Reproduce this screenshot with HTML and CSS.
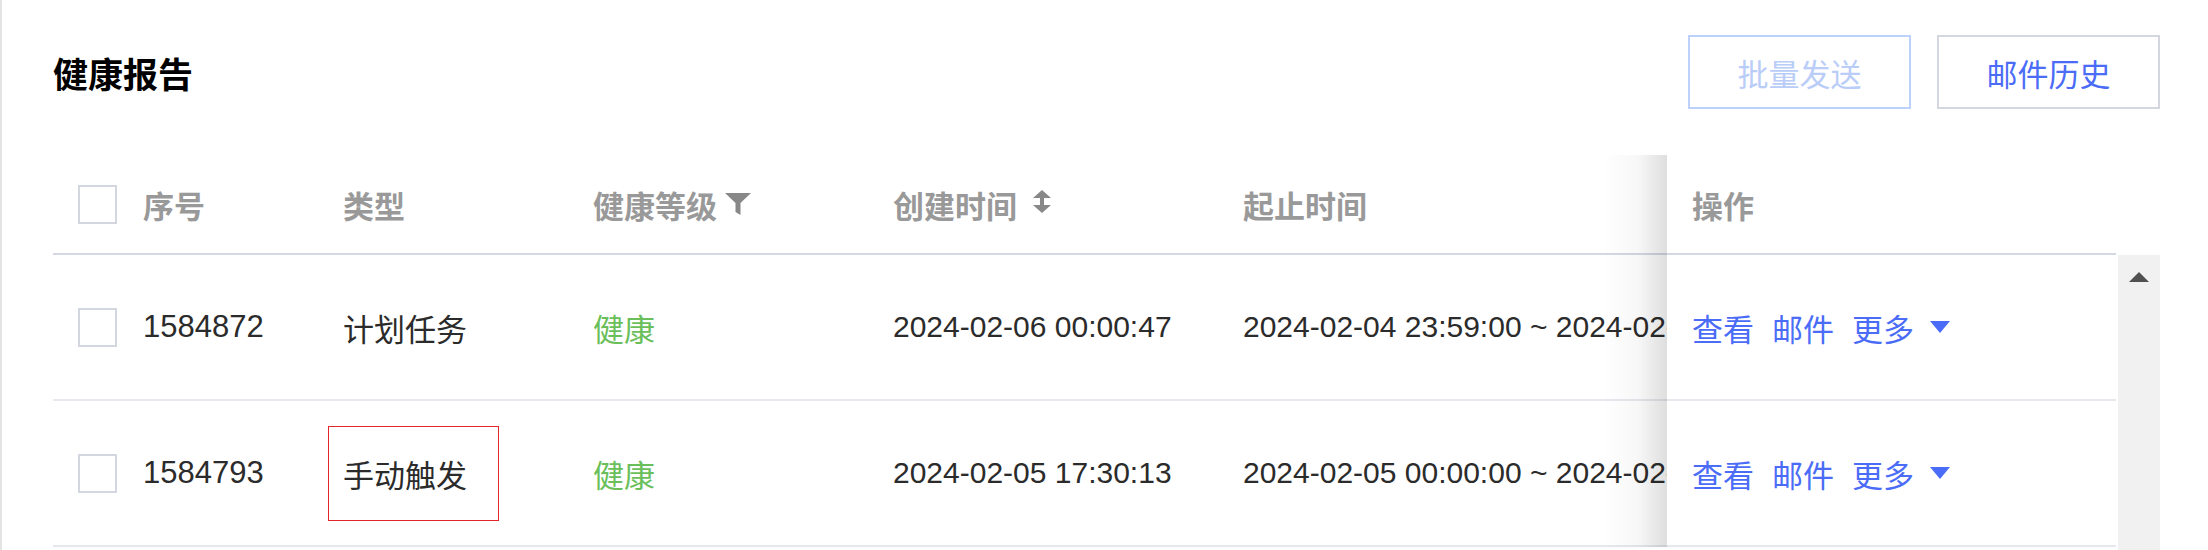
FILE: index.html
```html
<!DOCTYPE html>
<html lang="zh-CN">
<head>
    <meta charset="UTF-8">
    <title>健康报告</title>
    <link rel="stylesheet" href="styles.css">
</head>
<body>
<div class="card">
    <div class="head">
        <h2 class="title">健康报告</h2>
        <div class="actions">
            <button class="btn btn-disabled">批量发送</button>
            <button class="btn">邮件历史</button>
        </div>
    </div>

    <div class="table-wrap">
        <div class="table">
            <div class="tr thead">
                <div class="td c-chk"><span class="chk"></span></div>
                <div class="td c-seq">序号</div>
                <div class="td c-type">类型</div>
                <div class="td c-level">健康等级
                    <svg class="ico-filter" viewBox="0 0 26 22"><path d="M0 0H26L15.5 10V22L10.5 19V10Z"/></svg>
                </div>
                <div class="td c-created">创建时间
                    <svg class="ico-sort" viewBox="0 0 20 23"><path d="M10 0L19 8H1Z M8 8H12V15H8Z M1 15H19L10 23Z"/></svg>
                </div>
                <div class="td c-range">起止时间</div>
                <div class="td c-op">操作</div>
            </div>

            <div class="tr">
                <div class="td c-chk"><span class="chk"></span></div>
                <div class="td c-seq">1584872</div>
                <div class="td c-type">计划任务</div>
                <div class="td c-level ok">健康</div>
                <div class="td c-created time">2024-02-06 00:00:47</div>
                <div class="td c-range time">2024-02-04 23:59:00 ~ 2024-02-05 23:59:00</div>
                <div class="td c-op">
                    <a class="link">查看</a>
                    <a class="link">邮件</a>
                    <a class="link more">更多<svg class="ico-caret" viewBox="0 0 20 12"><path d="M0 0H20L10 12Z"/></svg></a>
                </div>
            </div>

            <div class="tr">
                <div class="td c-chk"><span class="chk"></span></div>
                <div class="td c-seq">1584793</div>
                <div class="td c-type"><span class="mark">手动触发</span></div>
                <div class="td c-level ok">健康</div>
                <div class="td c-created time">2024-02-05 17:30:13</div>
                <div class="td c-range time">2024-02-05 00:00:00 ~ 2024-02-05 17:30:13</div>
                <div class="td c-op">
                    <a class="link">查看</a>
                    <a class="link">邮件</a>
                    <a class="link more">更多<svg class="ico-caret" viewBox="0 0 20 12"><path d="M0 0H20L10 12Z"/></svg></a>
                </div>
            </div>
        </div>
        <div class="sbar">
            <svg class="ico-up" viewBox="0 0 20 10"><path d="M10 0L20 10H0Z"/></svg>
        </div>
    </div>
</div>
</body>
</html>
```

FILE: styles.css
```css
html, body {
    margin: 0;
    padding: 0;
    overflow: hidden;
    background-color: #fff;
}
body {
    font-family: "Liberation Sans", "Noto Sans CJK SC", sans-serif;
    font-size: 31px;
    color: #2b2b2b;
}
.card {
    height: 550px;
    box-sizing: border-box;
    border-left: 2px solid #e3e3e3;
    padding: 35px 48px 0 51px;
    display: flex;
    flex-direction: column;
}
.head {
    display: flex;
    justify-content: space-between;
    align-items: center;
    height: 74px;
}
.title {
    margin: 0;
    font-size: 35px;
    font-weight: bold;
    color: #000;
}
.actions {
    display: flex;
    gap: 26px;
}
.btn {
    width: 223px;
    height: 74px;
    padding: 0;
    border: 2px solid #d3d7df;
    background-color: #fff;
    color: #4a6cf7;
    font-family: inherit;
    font-size: 31px;
}
.btn-disabled {
    border-color: #bcd2fb;
    color: #b9cdf8;
}

.table-wrap {
    display: flex;
    flex: 1;
    margin-top: 46px;
}
.table {
    width: 2063px;
}
.tr {
    display: flex;
    height: 144px;
    border-bottom: 2px solid #e7e8ed;
}
.thead {
    height: 98px;
    border-bottom-color: #d4d8e1;
    font-weight: bold;
    color: #999;
}
.td {
    display: flex;
    align-items: center;
    box-sizing: border-box;
    padding-left: 25px;
    white-space: nowrap;
    background-color: #fff;
}
.c-chk { width: 65px; }
.c-seq { width: 200px; }
.c-type { width: 250px; }
.c-level { width: 300px; }
.c-created { width: 350px; }
.c-range {
    width: 449px;
    overflow: hidden;
}
.c-op {
    width: 449px;
    position: relative;
}
/* shadow of the fixed column */
.c-op::before {
    content: "";
    position: absolute;
    left: -64px;
    top: 0;
    bottom: -2px;
    width: 64px;
    background: linear-gradient(to right, rgba(0, 0, 0, 0), rgba(0, 0, 0, 0.03) 55%, rgba(0, 0, 0, 0.13));
}
.time {
    font-size: 30px;
}
.chk {
    width: 39px;
    height: 39px;
    box-sizing: border-box;
    border: 2px solid #d3d7df;
    background-color: #fff;
}
.ok {
    color: #6abf5b;
}
.mark {
    display: flex;
    align-items: center;
    height: 95px;
    box-sizing: border-box;
    margin-left: -15px;
    padding: 0 31px 0 14px;
    border: 1px solid #e3262b;
}
.ico-filter {
    width: 26px;
    height: 22px;
    margin-left: 8px;
    fill: #888;
}
.ico-sort {
    width: 20px;
    height: 23px;
    margin: -5px 0 0 15px;
    fill: #888;
}
.link {
    color: #4a6cf7;
    margin-right: 18px;
    cursor: pointer;
}
.more {
    display: flex;
    align-items: center;
}
.ico-caret {
    width: 20px;
    height: 12px;
    margin-left: 16px;
    fill: #4a6cf7;
}
.sbar {
    width: 42px;
    margin: 100px 0 0 2px;
    padding-top: 17px;
    box-sizing: border-box;
    background-color: #f1f1f1;
    display: flex;
    justify-content: center;
    align-items: flex-start;
}
.ico-up {
    width: 20px;
    height: 10px;
    fill: #505050;
}
```
